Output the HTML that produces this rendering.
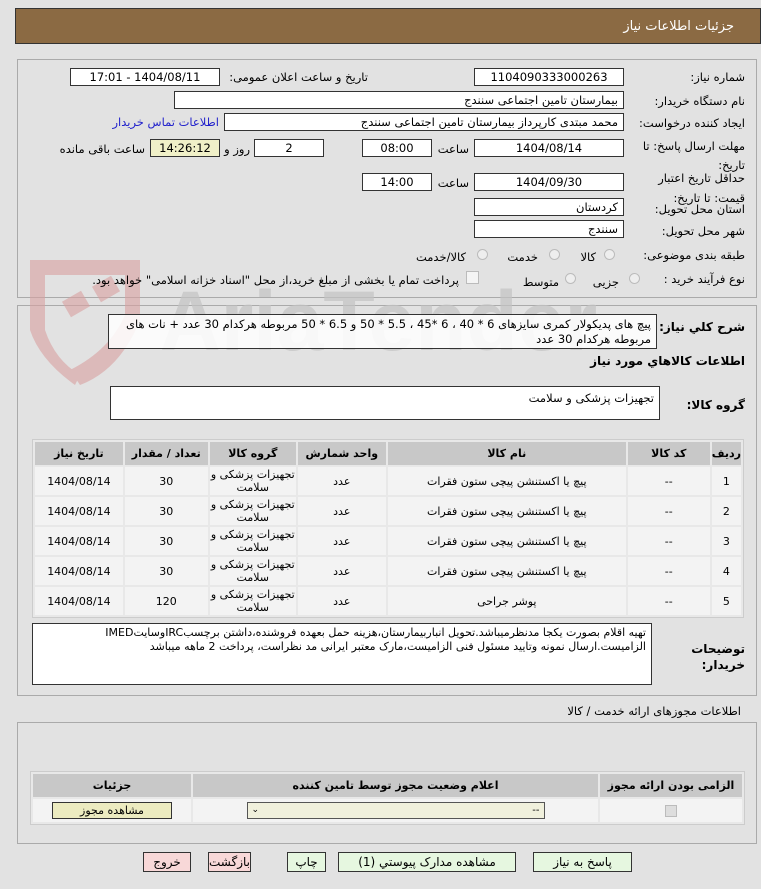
<!DOCTYPE html>
<html><head><meta charset="utf-8"><style>
*{box-sizing:border-box;margin:0;padding:0}
body{width:761px;height:889px;background:#e2e2e2;font-family:"DejaVu Sans","Liberation Sans",sans-serif;font-size:11.5px;color:#000;position:relative;overflow:hidden}
.a{position:absolute}
.t{position:absolute;white-space:nowrap;direction:rtl}
.b{position:absolute;background:#fff;border:1px solid #333;direction:rtl;padding:0 5px;line-height:16px;white-space:nowrap}
.c{text-align:center}
table{border-collapse:separate;border-spacing:2px;position:absolute;background:#e8e8e8;border:1px solid #ccc;direction:rtl}
td,th{text-align:center;font-size:11px}
th{background:#c8c8c8;height:23px}
td{background:#f3f3f3;height:28px}
.btn{position:absolute;border:1px solid #333;height:20px;line-height:18px;text-align:center;background:#e6f7e0;direction:rtl;font-size:12px}
.r{width:11px;height:11px;border:1px solid #bbb;border-radius:50%;background:#eee;position:absolute}
</style></head><body>
<div class="a" style="left:15px;top:8px;width:746px;height:36px;background:#8b6a43;border:1px solid #333"></div>
<div class="t" style="right:27px;top:19px;color:#fff;font-size:13px">جزئیات اطلاعات نیاز</div>

<div class="a" style="left:17px;top:59px;width:740px;height:239px;border:1px solid #aaa"></div>
<div class="a" style="left:17px;top:305px;width:740px;height:391px;border:1px solid #aaa"></div>

<!-- watermark -->
<svg class="a" style="left:20px;top:250px" width="600" height="150">
<path d="M10 10 L120 10 L120 70 Q100 120 60 135 L50 120 Q90 100 105 65 L105 25 L25 25 L25 80 Q35 110 60 125 L55 135 Q20 110 10 80Z" fill="#d9a0a0" opacity=".6"/>
<rect x="45" y="45" width="22" height="18" fill="#d9a0a0" opacity=".6" transform="rotate(-30 56 54)"/>
<rect x="75" y="30" width="22" height="18" fill="#d9a0a0" opacity=".6" transform="rotate(-30 86 39)"/>
<text x="140" y="100" font-family="Liberation Sans" font-weight="bold" font-size="84" fill="#c4c4c4" opacity=".7">AriaTender.net</text>
</svg>

<div class="t" style="right:16px;top:70px">شماره نیاز:</div>
<div class="b c" style="left:474px;top:68px;width:150px;height:18px">1104090333000263</div>
<div class="t" style="right:393px;top:70px">تاریخ و ساعت اعلان عمومی:</div>
<div class="b c" style="left:70px;top:68px;width:150px;height:18px">1404/08/11 - 17:01</div>

<div class="t" style="right:16px;top:94px">نام دستگاه خریدار:</div>
<div class="b" style="left:174px;top:91px;width:450px;height:18px">بیمارستان تامین اجتماعی سنندج</div>

<div class="t" style="right:16px;top:116px">ایجاد کننده درخواست:</div>
<div class="b" style="left:224px;top:113px;width:400px;height:18px">محمد مبتدی کارپرداز بیمارستان تامین اجتماعی سنندج</div>
<div class="t" style="right:542px;top:115px;color:#22c">اطلاعات تماس خریدار</div>

<div class="t" style="right:16px;top:137px;line-height:19px">مهلت ارسال پاسخ: تا<br>تاریخ:</div>
<div class="b c" style="left:474px;top:139px;width:150px;height:18px">1404/08/14</div>
<div class="t" style="right:292px;top:142px">ساعت</div>
<div class="b c" style="left:362px;top:139px;width:70px;height:18px">08:00</div>
<div class="b c" style="left:254px;top:139px;width:70px;height:18px">2</div>
<div class="t" style="right:511px;top:142px">روز و</div>
<div class="b c" style="left:150px;top:139px;width:70px;height:18px;background:#f0f0c8">14:26:12</div>
<div class="t" style="right:616px;top:142px">ساعت باقی مانده</div>

<div class="t" style="right:16px;top:168px;line-height:20px">حداقل تاریخ اعتبار<br>قیمت: تا تاریخ:</div>
<div class="b c" style="left:474px;top:173px;width:150px;height:18px">1404/09/30</div>
<div class="t" style="right:292px;top:176px">ساعت</div>
<div class="b c" style="left:362px;top:173px;width:70px;height:18px">14:00</div>

<div class="t" style="right:16px;top:202px">استان محل تحویل:</div>
<div class="b" style="left:474px;top:198px;width:150px;height:18px">کردستان</div>
<div class="t" style="right:16px;top:224px">شهر محل تحویل:</div>
<div class="b" style="left:474px;top:220px;width:150px;height:18px">سنندج</div>

<div class="t" style="right:16px;top:248px">طبقه بندی موضوعی:</div>
<div class="r" style="left:604px;top:249px"></div><div class="t" style="right:165px;top:250px">کالا</div>
<div class="r" style="left:549px;top:249px"></div><div class="t" style="right:223px;top:250px">خدمت</div>
<div class="r" style="left:477px;top:249px"></div><div class="t" style="right:295px;top:250px">کالا/خدمت</div>

<div class="t" style="right:16px;top:272px">نوع فرآیند خرید :</div>
<div class="r" style="left:629px;top:273px"></div><div class="t" style="right:142px;top:275px">جزیی</div>
<div class="r" style="left:565px;top:273px"></div><div class="t" style="right:202px;top:275px">متوسط</div>
<div class="a" style="left:466px;top:271px;width:13px;height:13px;border:1px solid #bbb;background:#f4f4f4"></div>
<div class="t" style="right:302px;top:273px">پرداخت تمام یا بخشی از مبلغ خرید،از محل "اسناد خزانه اسلامی" خواهد بود.</div>

<div class="t" style="right:16px;top:320px;font-weight:bold;font-size:12px">شرح کلي نیاز:</div>
<div class="b" style="left:108px;top:314px;width:549px;height:35px;white-space:normal;line-height:15px;padding-top:2px;background:rgba(255,255,255,.85)">پیچ های پدیکولار کمری سایزهای 6 * 40 ، 6 *45 ، 5.5 * 50 و 6.5 * 50  مربوطه هرکدام 30 عدد + نات های مربوطه هرکدام 30 عدد</div>
<div class="t" style="right:16px;top:354px;font-weight:bold;font-size:12px">اطلاعات کالاهاي مورد نیاز</div>

<div class="t" style="right:16px;top:398px;font-weight:bold;font-size:12px">گروه کالا:</div>
<div class="b" style="left:110px;top:386px;width:550px;height:34px;padding-top:3px">تجهیزات پزشکی و سلامت</div>

<table style="left:32px;top:439px;width:712px">
<tr><th style="width:28px">ردیف</th><th style="width:82px">کد کالا</th><th style="width:238px">نام کالا</th><th style="width:88px">واحد شمارش</th><th style="width:86px">گروه کالا</th><th style="width:83px">تعداد / مقدار</th><th>تاریخ نیاز</th></tr>
<tr><td>1</td><td>--</td><td>پیچ یا اکستنشن پیچی ستون فقرات</td><td>عدد</td><td>تجهیزات پزشکی و سلامت</td><td>30</td><td>1404/08/14</td></tr>
<tr><td>2</td><td>--</td><td>پیچ یا اکستنشن پیچی ستون فقرات</td><td>عدد</td><td>تجهیزات پزشکی و سلامت</td><td>30</td><td>1404/08/14</td></tr>
<tr><td>3</td><td>--</td><td>پیچ یا اکستنشن پیچی ستون فقرات</td><td>عدد</td><td>تجهیزات پزشکی و سلامت</td><td>30</td><td>1404/08/14</td></tr>
<tr><td>4</td><td>--</td><td>پیچ یا اکستنشن پیچی ستون فقرات</td><td>عدد</td><td>تجهیزات پزشکی و سلامت</td><td>30</td><td>1404/08/14</td></tr>
<tr><td>5</td><td>--</td><td>پوشر جراحی</td><td>عدد</td><td>تجهیزات پزشکی و سلامت</td><td>120</td><td>1404/08/14</td></tr>
</table>

<div class="t" style="right:16px;top:641px;font-weight:bold;font-size:12px;line-height:16px;white-space:normal;width:60px">توضیحات خریدار:</div>
<div class="b" style="left:32px;top:623px;width:620px;height:62px;white-space:normal;line-height:14px;padding-top:2px;font-size:11px">تهیه اقلام بصورت یکجا مدنظرمیباشد.تحویل انباربیمارستان،هزینه حمل بعهده فروشنده،داشتن برچسبIRCوسایتIMED الزامیست.ارسال نمونه وتایید مسئول فنی الزامیست،مارک معتبر ایرانی مد نظراست، پرداخت 2 ماهه میباشد</div>

<div class="t" style="right:20px;top:704px">اطلاعات مجوزهای ارائه خدمت / کالا</div>
<div class="a" style="left:17px;top:722px;width:740px;height:122px;border:1px solid #aaa"></div>
<table style="left:30px;top:771px;width:715px">
<tr><th style="width:142px">الزامی بودن ارائه مجوز</th><th style="width:405px">اعلام وضعیت مجوز توسط تامین کننده</th><th>جزئیات</th></tr>
<tr><td style="height:23px"><div style="width:12px;height:12px;margin:auto;background:#ddd;border:1px solid #bbb"></div></td><td style="height:23px"><div style="margin:0 auto;width:298px;height:17px;border:1px solid #555;background:#f0f0dc;text-align:right;padding-right:4px;font-size:10px;line-height:15px;position:relative">--<span style="position:absolute;left:4px;font-size:9px">⌄</span></div></td><td style="height:23px"><div style="margin:0 auto;width:120px;height:17px;border:1px solid #333;background:#ecebc0;line-height:15px">مشاهده مجوز</div></td></tr>
</table>

<div class="btn" style="left:533px;top:852px;width:99px">پاسخ به نیاز</div>
<div class="btn" style="left:338px;top:852px;width:178px">مشاهده مدارک پیوستي (1)</div>
<div class="btn" style="left:287px;top:852px;width:39px">چاپ</div>
<div class="btn" style="left:208px;top:852px;width:43px;background:#f8d8d8">بازگشت</div>
<div class="btn" style="left:143px;top:852px;width:48px;background:#f8d8d8">خروج</div>
</body></html>
